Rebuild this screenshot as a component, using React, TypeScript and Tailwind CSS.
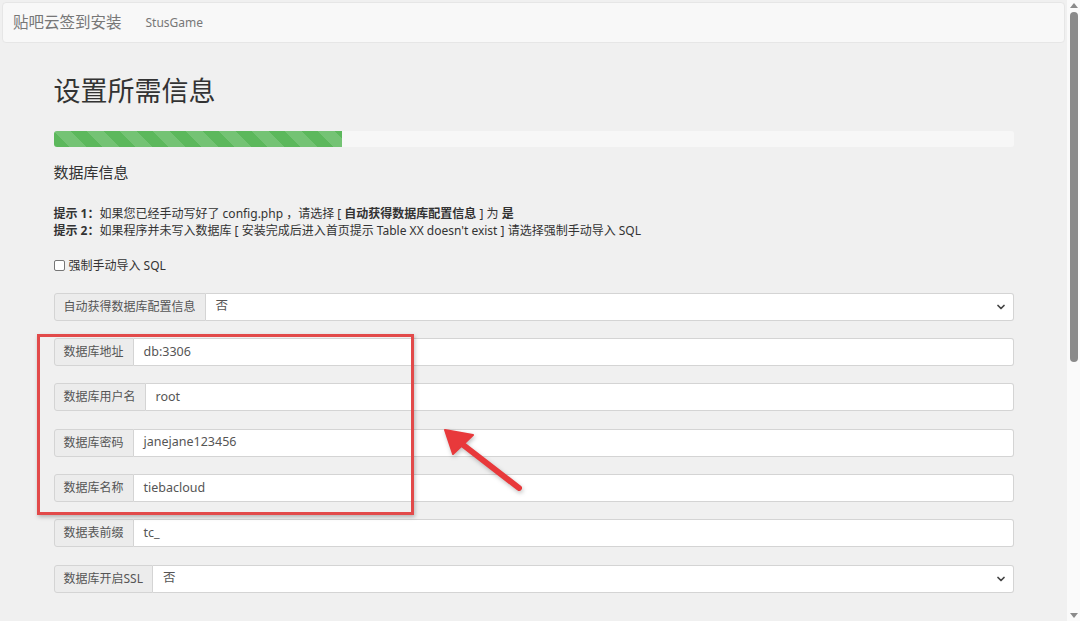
import { ChevronDown } from "lucide-react";

const font = "font-['Noto_Sans','Noto_Sans_CJK_SC',sans-serif]";

const rows = [
  { label: "自动获得数据库配置信息", value: "否", select: true },
  { label: "数据库地址", value: "db:3306" },
  { label: "数据库用户名", value: "root" },
  { label: "数据库密码", value: "janejane123456" },
  { label: "数据库名称", value: "tiebacloud" },
  { label: "数据表前缀", value: "tc_" },
  { label: "数据库开启SSL", value: "否", select: true },
];

function Row({ label, value, select }: { label: string; value: string; select?: boolean }) {
  return (
    <div className="flex h-[28px] w-full">
      <div className="flex items-center whitespace-nowrap rounded-l-[3px] border border-[#d4d4d4] bg-[#ececec] px-[9px] text-[12px] text-[#555]">
        {label}
      </div>
      <div className="flex flex-1 items-center rounded-r-[3px] border border-l-0 border-[#d4d4d4] bg-white pl-[10px] pr-[6px] text-[12.5px] text-[#555]">
        <span className="flex-1">{value}</span>
        {select && <ChevronDown size={12} strokeWidth={3.5} className="text-[#444]" />}
      </div>
    </div>
  );
}

export default function App() {
  return (
    <div className={`flex h-[621px] w-[1080px] overflow-hidden bg-[#f0f0f0] ${font}`}>
      <div className="relative flex-1">
        <nav className="mx-[2px] mt-[2px] flex h-[41px] items-center rounded-[4px] border border-[#e6e6e6] bg-[#f8f8f8] pl-[10px]">
          <span className="text-[15.5px] text-[#777]">贴吧云签到安装</span>
          <span className="ml-[24px] text-[12px] text-[#777]">StusGame</span>
        </nav>

        <div className="mx-auto w-[960px]">
          <h1 className="mt-[33px] text-[27px] leading-[30px] text-[#333]">设置所需信息</h1>

          <div className="mt-[25px] h-[16px] w-full overflow-hidden rounded-[3px] bg-[#f7f7f7]">
            <div className="h-full w-[30%] bg-[#5cb85c] bg-[linear-gradient(45deg,rgba(255,255,255,.15)_25%,transparent_25%,transparent_50%,rgba(255,255,255,.15)_50%,rgba(255,255,255,.15)_75%,transparent_75%,transparent)] bg-[length:33px_33px]" />
          </div>

          <h3 className="mt-[15px] text-[15px] leading-[20px] text-[#333]">数据库信息</h3>

          <div className="mt-[23px] text-[12px] leading-[17px] text-[#333]">
            <p>
              <b>提示 1：</b>如果您已经手动写好了 config.php ，请选择 [ <b>自动获得数据库配置信息</b> ] 为 <b>是</b>
            </p>
            <p>
              <b>提示 2：</b>如果程序并未写入数据库 [ 安装完成后进入首页提示 Table XX doesn't exist ] 请选择强制手动导入 SQL
            </p>
          </div>

          <label className="mt-[18px] flex h-[17px] items-center gap-[4px] text-[12px] text-[#333]">
            <span className="h-[11px] w-[11px] rounded-[2px] border border-[#767676] bg-white" />
            强制手动导入 SQL
          </label>

          <div className="mt-[18.5px] flex flex-col gap-[17.4px]">
            {rows.map((r) => (
              <Row key={r.label} {...r} />
            ))}
          </div>

          <h3 className="mt-[28px] text-[15px] leading-[20px] text-[#333]">站点创始人信息</h3>
        </div>

        {/* annotation overlay */}
        <div className="absolute left-[37px] top-[334px] h-[181px] w-[377px] border-[3px] border-[#e24a4a] shadow-[1px_2px_4px_rgba(0,0,0,0.25)]" />
        <svg className="absolute left-0 top-0" width="1067" height="621" style={{ filter: "drop-shadow(1px 2px 2px rgba(0,0,0,0.25))" }}>
          <line x1="519" y1="488" x2="462" y2="444" stroke="#e8393b" strokeWidth="6" strokeLinecap="round" />
          <polygon points="445,430 473,435 453,454" fill="#e8393b" stroke="#e8393b" strokeWidth="2" strokeLinejoin="round" />
        </svg>
      </div>

      {/* scrollbar */}
      <div className="relative w-[13px] bg-[#fafafa]">
        <div className="absolute left-[3px] top-[12px] h-[350px] w-[8px] rounded-[4px] bg-[#8a8a8a]" />
        <svg className="absolute left-[3px] top-[3px]" width="8" height="5">
          <polygon points="4,0 8,5 0,5" fill="#8a8a8a" />
        </svg>
        <svg className="absolute bottom-[3px] left-[3px]" width="8" height="5">
          <polygon points="0,0 8,0 4,5" fill="#8a8a8a" />
        </svg>
      </div>
    </div>
  );
}
